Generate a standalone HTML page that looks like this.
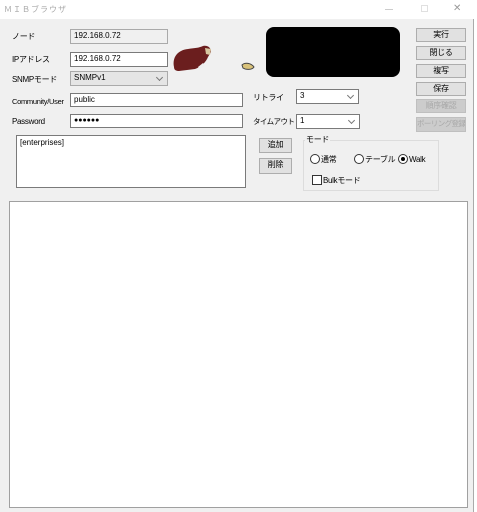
<!DOCTYPE html>
<html><head><meta charset="utf-8"><style>
*{box-sizing:border-box;margin:0;padding:0}
body{width:477px;height:512px;background:#fff;position:relative;overflow:hidden;font-family:"Liberation Sans","Noto Sans CJK JP",sans-serif;font-size:8px;color:#000}
.a{position:absolute}
.win{left:0;top:0;width:474px;height:512px;background:#f0f0f0;border-right:1px solid #aaa}
.tb{left:0;top:0;width:474px;height:19px;background:#fff}
.lbl{position:absolute;font-size:8px;line-height:11px;white-space:nowrap;letter-spacing:-0.3px}
.tx{position:absolute;background:#fff;border:1px solid #7a7a7a;font-size:8px;line-height:12px;padding-left:3px;white-space:nowrap}
.dis{background:#f0f0f0;border-color:#aaa}
.cb{position:absolute;background:#fff;border:1px solid #7a7a7a;font-size:8px;line-height:12px;padding-left:3px}
.cb::after{content:"";position:absolute;right:5px;top:3px;width:4px;height:4px;border-right:1px solid #777;border-bottom:1px solid #777;transform:rotate(45deg)}
.btn{position:absolute;background:#e1e1e1;border:1px solid #adadad;font-size:8px;line-height:12px;text-align:center;white-space:nowrap;overflow:hidden;letter-spacing:-0.3px}
.off{color:#a8a8a8;background:#ccc;border-color:#bfbfbf}
.rd{display:inline-block;width:10px;height:10px;border:1px solid #333;border-radius:50%;vertical-align:-2px;background:#fff;position:relative;margin-right:1px}
</style></head><body>
<div class="a win"></div>
<div class="a tb"></div>
<div class="lbl" style="left:4px;top:4px;color:#aaa;letter-spacing:1px;font-size:8px">ＭＩＢブラウザ</div>
<div class="a" style="left:385px;top:9px;width:8px;height:1px;background:#ccc"></div>
<div class="a" style="left:421px;top:5px;width:7px;height:7px;border:1px solid #e0e0e0"></div>
<div class="lbl" style="left:453px;top:3px;color:#999;font-size:10px">✕</div>

<div class="lbl" style="left:12px;top:31px">ノード</div>
<div class="tx dis" style="left:70px;top:29px;width:98px;height:15px">192.168.0.72</div>
<div class="lbl" style="left:12px;top:54px">IPアドレス</div>
<div class="tx" style="left:70px;top:52px;width:98px;height:15px">192.168.0.72</div>
<div class="lbl" style="left:12px;top:74px">SNMPモード</div>
<div class="cb" style="left:70px;top:71px;width:98px;height:15px;background:#e5e5e5;border-color:#aaa">SNMPv1</div>
<div class="lbl" style="left:12px;top:96px;font-size:7.5px">Community/User</div>
<div class="tx" style="left:70px;top:93px;width:173px;height:14px">public</div>
<div class="lbl" style="left:12px;top:116px">Password</div>
<div class="tx" style="left:70px;top:114px;width:173px;height:14px;font-size:7px">●●●●●●</div>
<div class="tx" style="left:16px;top:135px;width:230px;height:53px;padding-top:1px">[enterprises]</div>

<svg class="a" style="left:171px;top:43px" width="46" height="30"><path d="M3 24 C1 14 7 7 17 6 C23 5 28 5 32 3 C37 2 40 5 40 9 L37 14 C35 19 30 24 24 26 L8 28 C5 28 3 27 3 24Z" fill="#6b1e1e"/><path d="M34 5 L40 6 L39 12 L35 11Z" fill="#d8c7a0"/><path d="M27 24 L32 20 L34 23 L29 26Z" fill="#eee"/></svg>
<svg class="a" style="left:241px;top:61px" width="14" height="10"><path d="M1 4 C4 1 10 2 13 6 C11 9 5 9 2 7Z" fill="#d9c27a" stroke="#444" stroke-width="1"/></svg>

<div class="a" style="left:266px;top:27px;width:134px;height:50px;background:#000;border-radius:8px"></div>

<div class="btn" style="left:416px;top:28px;width:50px;height:14px">実行</div>
<div class="btn" style="left:416px;top:46px;width:50px;height:14px">閉じる</div>
<div class="btn" style="left:416px;top:64px;width:50px;height:14px">複写</div>
<div class="btn" style="left:416px;top:82px;width:50px;height:14px">保存</div>
<div class="btn off" style="left:416px;top:99px;width:50px;height:14px">順序確認</div>
<div class="btn off" style="left:416px;top:117px;width:50px;height:15px;font-size:7.5px;letter-spacing:-0.6px">ポーリング登録</div>

<div class="lbl" style="left:253px;top:92px">リトライ</div>
<div class="cb" style="left:296px;top:89px;width:63px;height:15px">3</div>
<div class="lbl" style="left:253px;top:116px;font-size:7.5px;letter-spacing:-0.6px">タイムアウト</div>
<div class="cb" style="left:296px;top:114px;width:64px;height:15px">1</div>

<div class="btn" style="left:259px;top:138px;width:33px;height:15px">追加</div>
<div class="btn" style="left:259px;top:158px;width:33px;height:16px">削除</div>

<div class="a" style="left:303px;top:140px;width:136px;height:51px;border:1px solid #dcdcdc"></div>
<div class="lbl" style="left:305px;top:134px;background:#f0f0f0;padding:0 1px">モード</div>
<div class="lbl" style="left:310px;top:154px"><span class="rd"></span>通常</div>
<div class="lbl" style="left:354px;top:154px"><span class="rd"></span>テーブル</div>
<div class="lbl" style="left:398px;top:154px"><span class="rd"><span style="position:absolute;left:2px;top:2px;width:4px;height:4px;border-radius:50%;background:#000"></span></span>Walk</div>
<div class="lbl" style="left:312px;top:175px"><span style="display:inline-block;width:10px;height:10px;border:1px solid #333;background:#fff;vertical-align:-2px;margin-right:1px"></span>Bulkモード</div>

<div class="a" style="left:9px;top:201px;width:459px;height:307px;background:#fff;border:1px solid #a0a0a0"></div>
</body></html>
